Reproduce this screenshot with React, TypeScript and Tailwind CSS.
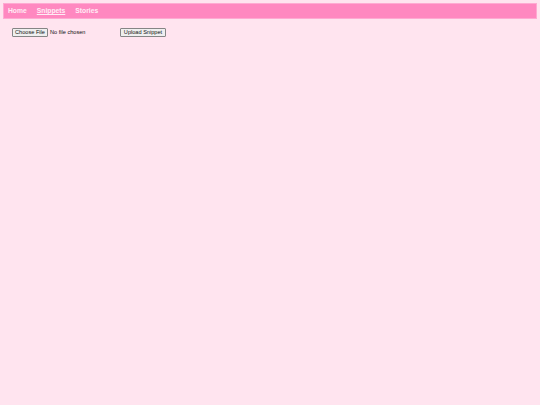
import React from "react";

export default function App() {
  return (
    <div className="w-[540px] h-[405px] bg-[#ffe4ef] pt-[3px] px-[3px] font-['Liberation_Sans',Arial,sans-serif]">
      <nav className="h-[16px] bg-[#ff88c0] border border-[#ffaad2] flex items-center pl-[4px] pt-[1px] gap-[10px] text-[6.75px] font-bold text-[#ffecf5] leading-none">
        <a className="no-underline">Home</a>
        <a className="underline">Snippets</a>
        <a className="no-underline">Stories</a>
      </nav>
      <div className="mt-[9px] ml-[9px] flex items-center h-[9px] text-[5.6px] leading-none text-[#111]">
        <div className="w-[108px] flex items-center">
          <span className="h-[9px] w-[36px] flex items-center justify-center border border-[#858585] bg-[#efefef] rounded-[1px]">
            Choose File
          </span>
          <span className="ml-[2px]">No file chosen</span>
        </div>
        <span className="h-[9px] w-[46px] flex items-center justify-center border border-[#858585] bg-[#efefef] rounded-[1px]">
          Upload Snippet
        </span>
      </div>
    </div>
  );
}
